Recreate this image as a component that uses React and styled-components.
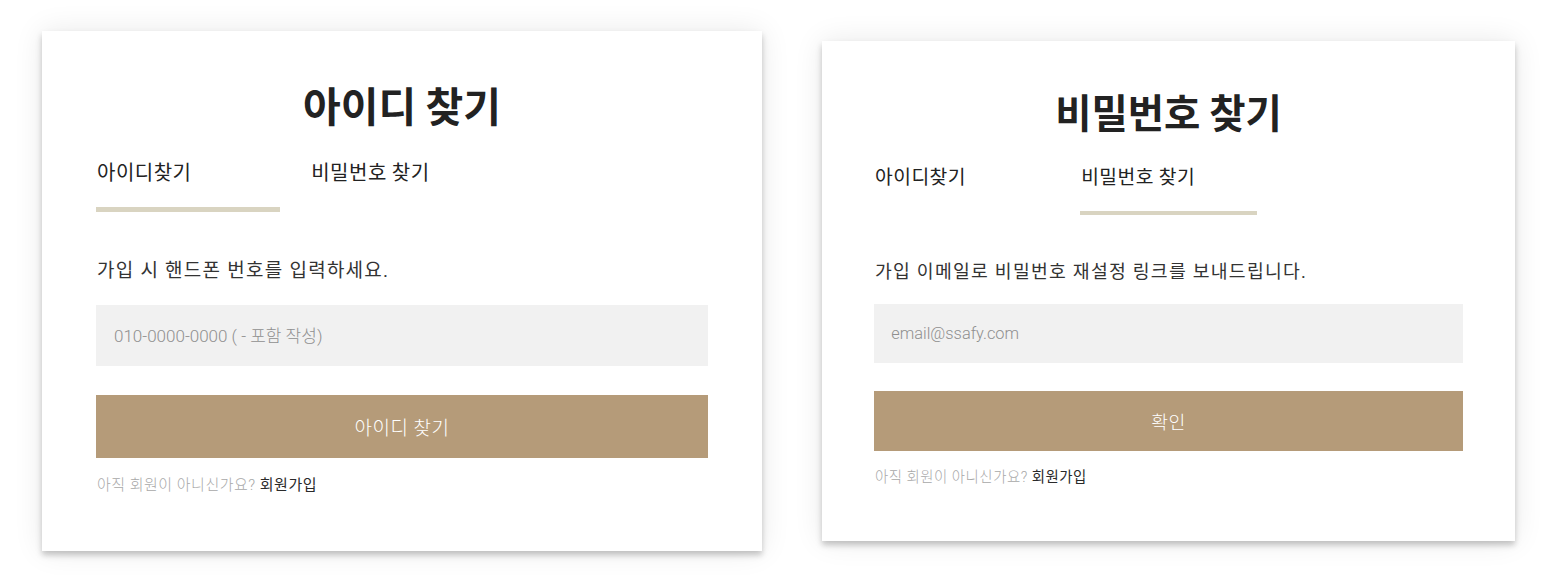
import React, { useState } from 'react';
import styled, { createGlobalStyle } from 'styled-components';

const GlobalStyle = createGlobalStyle`
  * {
    box-sizing: border-box;
  }
  body {
    margin: 0;
    background: #fff;
    font-family: Roboto, 'Noto Sans CJK KR', sans-serif;
    color: #222;
  }
`;

const Page = styled.div`
  display: flex;
  align-items: center;
  gap: 60px;
  height: 575px;
  padding: 7px 0 0 42px;
`;

const Card = styled.section`
  display: flex;
  flex-direction: column;
  width: ${(p) => 720 * p.$s}px;
  padding: ${(p) => `${49 * p.$s}px ${54 * p.$s}px ${56 * p.$s}px`};
  background: #fff;
  box-shadow: 0 4px 6px rgba(0, 0, 0, 0.22), 0 0 28px rgba(0, 0, 0, 0.09);
`;

const Title = styled.h1`
  margin: 0;
  font-family: 'Noto Sans CJK KR', sans-serif;
  font-size: ${(p) => 41 * p.$s}px;
  line-height: ${(p) => 48 * p.$s}px;
  font-weight: 700;
  text-align: center;
  color: #222;
`;

const Tabs = styled.div`
  display: flex;
  gap: 5%;
  margin-top: ${(p) => 30 * p.$s}px;
`;

const Tab = styled.button`
  flex: 0 0 30%;
  padding: 0 0 ${(p) => 22 * p.$s}px 1px;
  border: 0;
  border-bottom: ${(p) => 5 * p.$s}px solid ${(p) => (p.$active ? '#d9d4c1' : 'transparent')};
  background: none;
  text-align: left;
  font-family: 'Noto Sans CJK KR', sans-serif;
  font-size: ${(p) => 20 * p.$s}px;
  line-height: ${(p) => 27 * p.$s}px;
  letter-spacing: 0.5px;
  color: #222;
  cursor: pointer;
`;

const Desc = styled.p`
  margin: ${(p) => 46 * p.$s}px 0 0 1px;
  font-size: ${(p) => 19 * p.$s}px;
  line-height: ${(p) => 26 * p.$s}px;
  letter-spacing: 1.25px;
  font-weight: 400;
  color: #333;
`;

const Input = styled.input`
  width: 100%;
  height: ${(p) => 61 * p.$s}px;
  margin-top: ${(p) => 21 * p.$s}px;
  padding: 0 ${(p) => 18 * p.$s}px;
  border: 0;
  outline: none;
  background: #f1f1f1;
  font-family: Roboto, 'Noto Sans CJK KR', sans-serif;
  font-size: ${(p) => 17 * p.$s}px;
  font-weight: 300;
  color: #333;

  &::placeholder {
    color: #8f8f8f;
  }
`;

const Submit = styled.button`
  width: 100%;
  height: ${(p) => 63 * p.$s}px;
  margin-top: ${(p) => 29 * p.$s}px;
  border: 0;
  background: #b59b79;
  color: #fff;
  font-family: Roboto, 'Noto Sans CJK KR', sans-serif;
  font-size: ${(p) => 19 * p.$s}px;
  letter-spacing: 0.5px;
  font-weight: 300;
  cursor: pointer;
`;

const Footer = styled.p`
  margin: ${(p) => 17 * p.$s}px 0 0 1px;
  font-size: ${(p) => 15 * p.$s}px;
  line-height: ${(p) => 20 * p.$s}px;
  letter-spacing: 0.5px;
  font-weight: 300;
  color: #a8a8a8;
`;

const Join = styled.a`
  color: #2a2a2a;
  font-weight: 400;
  text-decoration: none;
`;

const content = {
  id: {
    title: '아이디 찾기',
    desc: '가입 시 핸드폰 번호를 입력하세요.',
    placeholder: '010-0000-0000 ( - 포함 작성)',
    button: '아이디 찾기',
  },
  pw: {
    title: '비밀번호 찾기',
    desc: '가입 이메일로 비밀번호 재설정 링크를 보내드립니다.',
    placeholder: 'email@ssafy.com',
    button: '확인',
  },
};

const FindCard = ({ initial, s }) => {
  const [tab, setTab] = useState(initial);
  const c = content[tab];

  return (
    <Card $s={s}>
      <Title $s={s}>{c.title}</Title>
      <Tabs $s={s}>
        <Tab $s={s} $active={tab === 'id'} onClick={() => setTab('id')}>
          아이디찾기
        </Tab>
        <Tab $s={s} $active={tab === 'pw'} onClick={() => setTab('pw')}>
          비밀번호 찾기
        </Tab>
      </Tabs>
      <Desc $s={s}>{c.desc}</Desc>
      <Input $s={s} type='text' placeholder={c.placeholder} />
      <Submit $s={s}>{c.button}</Submit>
      <Footer $s={s}>
        아직 회원이 아니신가요? <Join href='#'>회원가입</Join>
      </Footer>
    </Card>
  );
};

export default function App() {
  return (
    <>
      <GlobalStyle />
      <Page>
        <FindCard initial='id' s={1} />
        <FindCard initial='pw' s={0.9625} />
      </Page>
    </>
  );
}
